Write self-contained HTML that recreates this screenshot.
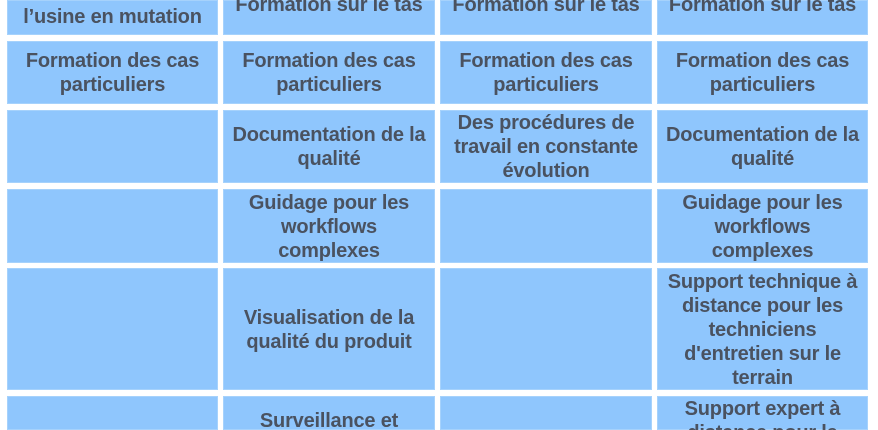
<!DOCTYPE html>
<html><head><meta charset="utf-8"><style>
html,body{margin:0;padding:0;background:#fff;width:878px;height:430px;overflow:hidden;position:relative}
.c{position:absolute;background:#8fc6fd;box-shadow:inset 0 0 0 1px #a6d2fc;display:flex;align-items:center;justify-content:center;text-align:center;font-family:"Liberation Sans",Arial,sans-serif;font-weight:bold;font-size:20px;line-height:24px;color:#4a5260;box-sizing:border-box;padding:1px 0 0;overflow:hidden;letter-spacing:-0.2px}
.t{align-items:flex-start}
</style></head><body>
<div class="c" style="left:7px;top:0;width:211px;height:35px;align-items:flex-end;padding-bottom:6px">l’usine en mutation</div>
<div class="c" style="left:223px;top:0;width:212px;height:35px;align-items:flex-start"><span style="margin-top:-8px">Formation sur le tas</span></div>
<div class="c" style="left:440px;top:0;width:212px;height:35px;align-items:flex-start"><span style="margin-top:-8px">Formation sur le tas</span></div>
<div class="c" style="left:657px;top:0;width:211px;height:35px;align-items:flex-start"><span style="margin-top:-8px">Formation sur le tas</span></div>

<div class="c" style="left:7px;top:41px;width:211px;height:63px">Formation des cas<br>particuliers</div>
<div class="c" style="left:223px;top:41px;width:212px;height:63px">Formation des cas<br>particuliers</div>
<div class="c" style="left:440px;top:41px;width:212px;height:63px">Formation des cas<br>particuliers</div>
<div class="c" style="left:657px;top:41px;width:211px;height:63px">Formation des cas<br>particuliers</div>

<div class="c" style="left:7px;top:110px;width:211px;height:73px"></div>
<div class="c" style="left:223px;top:110px;width:212px;height:73px">Documentation de la<br>qualité</div>
<div class="c" style="left:440px;top:110px;width:212px;height:73px">Des procédures de<br>travail en constante<br>évolution</div>
<div class="c" style="left:657px;top:110px;width:211px;height:73px">Documentation de la<br>qualité</div>

<div class="c" style="left:7px;top:189px;width:211px;height:74px"></div>
<div class="c" style="left:223px;top:189px;width:212px;height:74px">Guidage pour les<br>workflows<br>complexes</div>
<div class="c" style="left:440px;top:189px;width:212px;height:74px"></div>
<div class="c" style="left:657px;top:189px;width:211px;height:74px">Guidage pour les<br>workflows<br>complexes</div>

<div class="c" style="left:7px;top:268px;width:211px;height:122px"></div>
<div class="c" style="left:223px;top:268px;width:212px;height:122px">Visualisation de la<br>qualité du produit</div>
<div class="c" style="left:440px;top:268px;width:212px;height:122px"></div>
<div class="c" style="left:657px;top:268px;width:211px;height:122px">Support technique à<br>distance pour les<br>techniciens<br>d'entretien sur le<br>terrain</div>

<div class="c t" style="left:7px;top:396px;width:211px;height:34px"></div>
<div class="c t" style="left:223px;top:396px;width:212px;height:34px;padding-top:13px">Surveillance et</div>
<div class="c t" style="left:440px;top:396px;width:212px;height:34px"></div>
<div class="c t" style="left:657px;top:396px;width:211px;height:34px">Support expert à<br>distance pour le</div>
</body></html>
